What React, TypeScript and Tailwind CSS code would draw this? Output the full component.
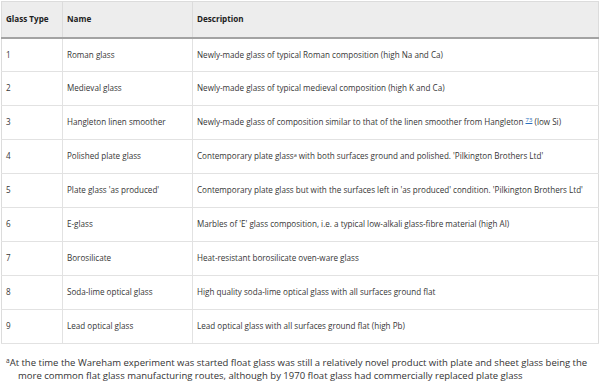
const ROWS: { type: string; name: string; desc: React.ReactNode }[] = [
  { type: '1', name: 'Roman glass', desc: 'Newly-made glass of typical Roman composition (high Na and Ca)' },
  { type: '2', name: 'Medieval glass', desc: 'Newly-made glass of typical medieval composition (high K and Ca)' },
  {
    type: '3',
    name: 'Hangleton linen smoother',
    desc: (
      <>
        Newly-made glass of composition similar to that of the linen smoother from Hangleton{' '}
        <sup className="text-[6px] text-[#2a6ebb] underline">73</sup> (low Si)
      </>
    ),
  },
  {
    type: '4',
    name: 'Polished plate glass',
    desc: (
      <>
        Contemporary plate glass<sup className="text-[5.5px]">a</sup> with both surfaces ground and polished. 'Pilkington Brothers Ltd'
      </>
    ),
  },
  {
    type: '5',
    name: "Plate glass 'as produced'",
    desc: "Contemporary plate glass but with the surfaces left in 'as produced' condition. 'Pilkington Brothers Ltd'",
  },
  { type: '6', name: 'E-glass', desc: "Marbles of 'E' glass composition, i.e. a typical low-alkali glass-fibre material (high Al)" },
  { type: '7', name: 'Borosilicate', desc: 'Heat-resistant borosilicate oven-ware glass' },
  { type: '8', name: 'Soda-lime optical glass', desc: 'High quality soda-lime optical glass with all surfaces ground flat' },
  { type: '9', name: 'Lead optical glass', desc: 'Lead optical glass with all surfaces ground flat (high Pb)' },
];

export default function App() {
  return (
    <div className="w-[600px] h-[384px] bg-white pt-[1px] pl-[1px] pr-[1px] text-[#363636] font-['Open_Sans',sans-serif]">
      <table className="w-[598px] border-collapse border border-[#dcdcdc] table-fixed text-[8.1px] leading-none">
        <colgroup>
          <col className="w-[61px]" />
          <col className="w-[130px]" />
          <col />
        </colgroup>
        <thead>
          <tr className="h-[36px] bg-[#ededed] border-b-2 border-[#a3a3a3]">
            <th className="text-left font-bold text-[#222] px-[4px] border-r border-[#dcdcdc]">Glass Type</th>
            <th className="text-left font-bold text-[#222] px-[4px] border-r border-[#dcdcdc]">Name</th>
            <th className="text-left font-bold text-[#222] px-[4px]">Description</th>
          </tr>
        </thead>
        <tbody>
          {ROWS.map(r => (
            <tr key={r.type} className="h-[34px] border-b border-[#e2e2e2]">
              <td className="px-[4px] border-r border-[#e2e2e2]">{r.type}</td>
              <td className="px-[4px] border-r border-[#e2e2e2]">{r.name}</td>
              <td className="px-[4px] whitespace-nowrap">{r.desc}</td>
            </tr>
          ))}
        </tbody>
      </table>
      <p className="mt-[12px] pl-[17px] -indent-[12px] text-[9.5px] leading-[13px] text-[#333]">
        <sup className="text-[6.5px]">a</sup>At the time the Wareham experiment was started float glass was still a relatively novel product with plate and sheet glass being the more common flat glass manufacturing routes, although by 1970 float glass had commercially replaced plate glass
      </p>
    </div>
  );
}
